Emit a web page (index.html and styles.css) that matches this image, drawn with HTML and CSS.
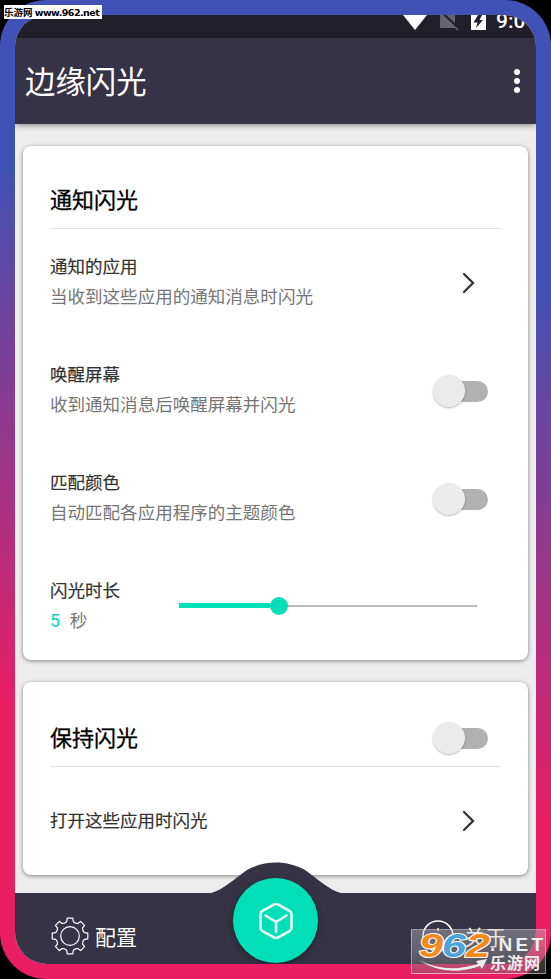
FILE: index.html
```html
<!DOCTYPE html>
<html lang="zh-CN">
<head>
<meta charset="utf-8">
<title>边缘闪光</title>
<link rel="stylesheet" href="styles.css">
</head>
<body>
<div class="edge">
  <div class="screen">
    <div class="status">
      <svg width="94" height="23" viewBox="0 0 94 23">
        <path d="M2 0H26L14 15Z" fill="#fff"/>
        <path d="M39 0H54V13H39Z" fill="#66656d"/>
        <path d="M42 -2L58 13" stroke="#211f2a" stroke-width="1.500"/><path d="M40 -1L57 15" stroke="#66656d" stroke-width="1.500"/><path d="M41 -1.500L57.500 14" stroke="#211f2a" stroke-width="1"/>
        <path d="M70 0H85V15H70Z" fill="#fff"/>
        <path d="M77 0L72.500 7.500H76.500L75 13L82 5H78.500L81 0Z" fill="#211f2a"/>
      </svg>
      <span class="clock">9:0</span>
    </div>
    <header class="bar">
      <h1>边缘闪光</h1>
      <div class="more"><i></i><i></i><i></i></div>
    </header>
    <main>
      <section class="card first">
        <div class="head"><h2>通知闪光</h2></div>
        <div class="row"><div class="text"><h3>通知的应用</h3><p>当收到这些应用的通知消息时闪光</p></div><svg class="chev" width="14" height="22" viewBox="0 0 14 22"><path d="M2 2L11 11L2 20"/></svg></div>
        <div class="row"><div class="text"><h3>唤醒屏幕</h3><p>收到通知消息后唤醒屏幕并闪光</p></div><div class="switch"></div></div>
        <div class="row"><div class="text"><h3>匹配颜色</h3><p>自动匹配各应用程序的主题颜色</p></div><div class="switch"></div></div>
        <div class="row"><div class="text"><h3>闪光时长</h3><p><b>5</b>秒</p></div><div class="slider"><div class="fill"></div><div class="knob"></div><div class="rest"></div></div></div>
      </section>
      <section class="card second">
        <div class="head"><h2>保持闪光</h2><div class="switch"></div></div>
        <div class="row single"><div class="text"><h3>打开这些应用时闪光</h3></div><svg class="chev" width="14" height="22" viewBox="0 0 14 22"><path d="M2 2L11 11L2 20"/></svg></div>
      </section>
    </main>
    <nav>
      <svg class="hump" width="130" height="32" viewBox="0 0 130 32"><path d="M0 31C12 28 23 17 36 8C54 -2 76 -2 94 8C107 17 118 28 130 31V32H0Z" fill="#353345"/></svg>
      <div class="tab"><svg width="38" height="38" viewBox="-19 -19 38 38" fill="none" stroke="#fff" stroke-width="1.200" stroke-linejoin="round"><circle r="9.300"/><path id="gear"/></svg><span>配置</span></div>
      <div class="fab"><svg width="36" height="40" viewBox="-18 -20 36 40" fill="none" stroke="#e8fffb" stroke-width="2.600" stroke-linecap="round" stroke-linejoin="round"><path d="M-2 -16.500Q0 -17.500 2 -16.500L13.500 -10.200Q15.500 -9 15.500 -7V7Q15.500 9 13.500 10.200L2 16.500Q0 17.500 -2 16.500L-13.500 10.200Q-15.500 9 -15.500 7V-7Q-15.500 -9 -13.500 -10.200ZM-10.500 -5.500L0 1L10.500 -5.500M0 1V11"/></svg></div>
      <div class="tab about"><svg width="34" height="34" viewBox="-17 -17 34 34" fill="none" stroke="#fff" stroke-width="1.500"><circle r="15"/><path d="M0 -8V-5M0 -2V8"/></svg><span>关于</span></div>
    </nav>
  </div>
</div>
<div class="tag">乐游网 <b>www.962.net</b></div>
<div class="mark">
  <svg width="135" height="45" viewBox="0 0 135 45">
    <path d="M8 31Q35 45 67 35L65 32L76 30L71 40L69 37Q35 49 8 31Z" fill="#eee"/>
    <g font-family="Liberation Sans" font-weight="bold" font-style="italic" font-size="33" stroke="#fff" stroke-width="2" stroke-linejoin="round" paint-order="stroke">
      <text x="8" y="28" textLength="24" lengthAdjust="spacingAndGlyphs" fill="#f28a1c">9</text>
      <text x="31" y="28" textLength="24" lengthAdjust="spacingAndGlyphs" fill="#4da3dc">6</text>
      <text x="55" y="28" textLength="24" lengthAdjust="spacingAndGlyphs" fill="#f28a1c">2</text>
    </g>
    <text x="79" y="22" font-family="Liberation Sans" font-weight="bold" font-size="19" textLength="53" fill="#eee">.NET</text>
    <text x="79" y="40" font-family="Noto Sans CJK SC" font-weight="bold" font-size="16" textLength="50" fill="#eee">乐游网</text>
  </svg>
</div>
<script src="icons.js"></script>
</body>
</html>
```
FILE: icons.js
```js
// Eight-toothed settings gear outline
const points = [];
for (let i = 0; i < 8; i++) {
  const profile = [[-22.5, 14], [-13, 14.7], [-9, 18], [9, 18], [13, 14.7]];
  for (const [offset, radius] of profile) {
    const a = (i * 45 + offset) * Math.PI / 180;
    points.push((Math.sin(a) * radius).toFixed(2) + " " + (-Math.cos(a) * radius).toFixed(2));
  }
}
document.getElementById("gear").setAttribute("d", "M" + points.join("L") + "Z");
```
FILE: styles.css
```css
* { box-sizing: border-box; margin: 0; padding: 0; }
body { width: 551px; height: 979px; background: #000; overflow: hidden; font-family: Roboto, "Noto Sans CJK SC", sans-serif; }
.edge { width: 551px; height: 979px; padding: 15px; border-radius: 46px; background: linear-gradient(192deg, #4052b5 277px, #e91e63 804px); }
.screen { height: 949px; width: 521px; border-radius: 32px; overflow: hidden; background: #ededed; display: flex; flex-direction: column; }
.status { height: 23px; flex: none; background: #211f2a; display: flex; padding-left: 386px; color: #fff; overflow: hidden; }
.status svg { flex: none; }
.clock { font-size: 21px; line-height: 24px; margin: -6px 0 0 1px; font-weight: 500; white-space: nowrap; }
.bar { height: 86px; flex: none; background: #353345; display: flex; justify-content: space-between; padding: 0 16px 0 10px; align-items: center; box-shadow: 0 1px 6px #0007; color: #fff; }
.bar h1 { font-size: 30.400px; font-weight: 400; line-height: 44px; padding-top: 3px; }
.more { display: flex; flex-direction: column; gap: 2.500px; }
.more i { width: 6.500px; height: 6.500px; border-radius: 50%; background: #fff; }
main { flex: none; height: 769px; padding: 22px 8px 0; }
.card { background: #fff; border-radius: 8px; box-shadow: 0 1px 4px #0007; padding: 0 27px; }
.first { height: 514px; margin-bottom: 22px; }
.second { height: 193px; }
.head { height: 83px; border-bottom: 1px solid #e2e2e2; display: flex; align-items: flex-start; justify-content: space-between; padding-right: 13px; padding-top: 39px; }
.second .head { height: 85px; padding-top: 40px; }
h2 { font-size: 22px; line-height: 32px; font-weight: 400; color: #000; -webkit-text-stroke: .3px #000; }
.second h2 { padding-top: 1px; }
.row { height: 108px; display: flex; justify-content: space-between; align-items: center; padding-right: 13px; }
.text { flex: none; margin-top: -2px; }
.single .text { margin-top: 1px; }
h3 { font-size: 17.500px; line-height: 30px; font-weight: 400; color: #333; -webkit-text-stroke: .2px #333; }
p { font-size: 17.550px; line-height: 30px; color: #757575; }
p b { color: #00d9b8; font-weight: 400; margin-right: 10px; }
.chev { margin-right: 12px; fill: none; stroke: #333; stroke-width: 2.300; stroke-linecap: round; }
.switch { width: 55px; height: 32px; display: flex; align-items: center; position: relative; }
.switch::before { content: ""; width: 42px; height: 21px; margin-left: 13px; border-radius: 11px; background: #b1b1b1; }
.switch::after { content: ""; position: absolute; left: 0; top: 0; width: 32px; height: 32px; border-radius: 50%; background: #ebebeb; box-shadow: 0 1px 2px #0004; }
.slider { width: 298px; display: flex; align-items: center; margin-right: 11px; margin-top: -3px; }
.fill { width: 91px; height: 5px; background: #00dfb8; }
.knob { width: 18px; height: 18px; border-radius: 50%; background: #00dfb8; }
.rest { flex: 1; height: 2px; background: #b9b9b9; }
.single { height: 107px; }
nav { flex: none; height: 71px; background: #353345; display: flex; position: relative; color: #fff; padding: 0 30px 0 36px; justify-content: space-between; }
.hump { position: absolute; left: 196px; top: -31px; }
.tab { display: flex; align-items: center; gap: 6px; height: 38px; margin-top: 24px; font-size: 21px; }
.about { gap: 9px; }
.fab { position: absolute; left: 218px; top: -15px; width: 85px; height: 85px; border-radius: 50%; background: #00dfb8; display: flex; align-items: center; justify-content: center; box-shadow: 0 2px 6px #0005; }
.tag { position: absolute; left: 4px; top: 5px; width: 98px; height: 14px; background: #fff; color: #000; font: bold 9.500px/14px "Noto Sans CJK SC", sans-serif; white-space: nowrap; }
.tag b { font: bold 9.500px/14px "DejaVu Sans", sans-serif; letter-spacing: -.55px; }
.mark { position: absolute; left: 411px; top: 929px; width: 135px; height: 45px; background: linear-gradient(#c8c8cc66, #77777766); border: 1px solid #ffffff70; }
.mark svg { display: block; margin: -1px; }
```
